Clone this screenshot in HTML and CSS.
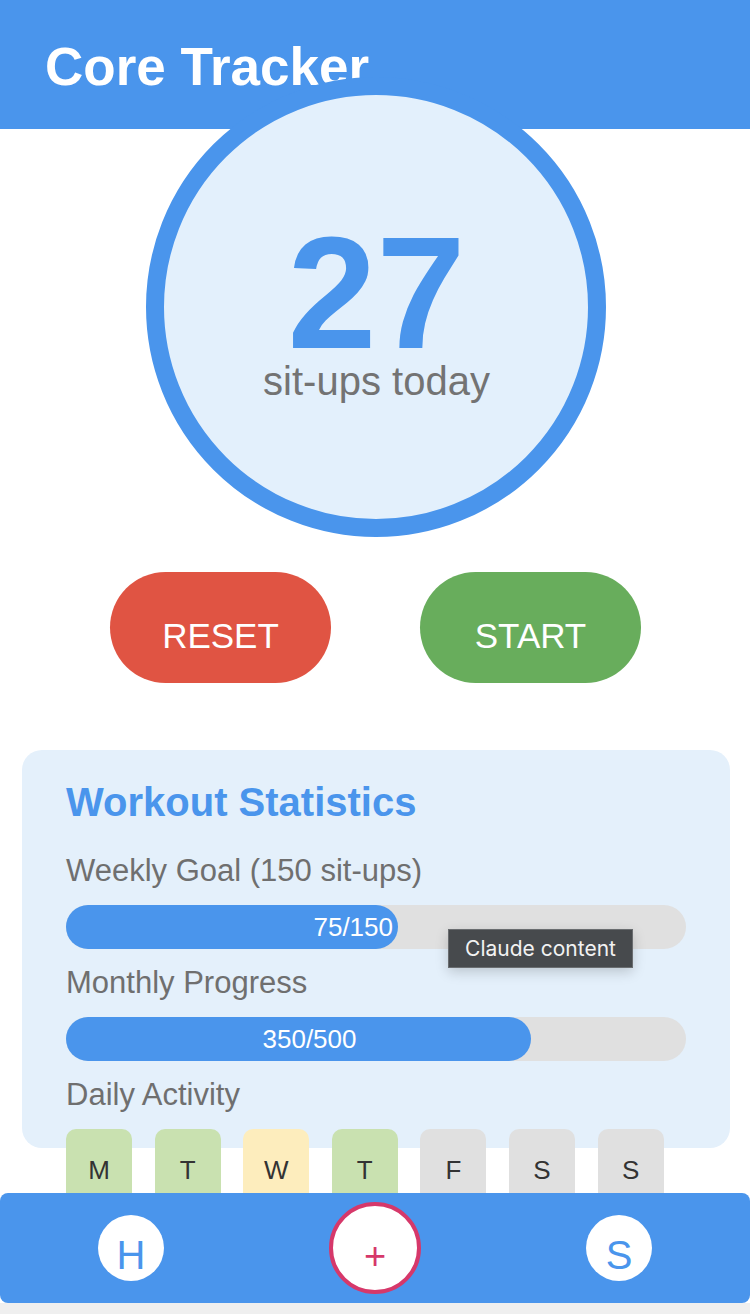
FILE: index.html
```html
<!DOCTYPE html>
<html lang="en">
<head>
<meta charset="utf-8">
<title>Core Tracker</title>
<link rel="stylesheet" href="styles.css">
</head>
<body>
<div class="app">
  <header class="top-bar">
    <h1 class="title">Core Tracker</h1>
  </header>

  <section class="counter-wrap">
    <div class="counter">
      <div class="count">27</div>
      <div class="count-label">sit-ups today</div>
    </div>
  </section>

  <section class="actions">
    <button class="btn btn-reset">RESET</button>
    <button class="btn btn-start">START</button>
  </section>

  <section class="stats">
    <h2 class="stats-title">Workout Statistics</h2>
    <div class="stat-label">Weekly Goal (150 sit-ups)</div>
    <div class="bar">
      <div class="fill fill-weekly" style="width: 332px;">75/150</div>
    </div>
    <div class="stat-label">Monthly Progress</div>
    <div class="bar">
      <div class="fill fill-monthly" style="width: 465px;">350/500</div>
    </div>
    <div class="stat-label">Daily Activity</div>
    <div class="days">
      <div class="day day-done">M</div>
      <div class="day day-done">T</div>
      <div class="day day-partial">W</div>
      <div class="day day-done">T</div>
      <div class="day day-none">F</div>
      <div class="day day-none">S</div>
      <div class="day day-none">S</div>
    </div>
  </section>

  <div class="tooltip">Claude content</div>

  <nav class="bottom-nav">
    <div class="nav-item"><span class="nav-icon">H</span></div>
    <div class="nav-item"><span class="nav-add">+</span></div>
    <div class="nav-item"><span class="nav-icon">S</span></div>
  </nav>
</div>
</body>
</html>
```

FILE: styles.css
```css
html {
  background: #efefef;
}

body {
  margin: 0;
  font-family: "Liberation Sans", Arial, sans-serif;
}

.app {
  background: #ffffff;
  min-height: 1303px;
  position: relative;
}

.top-bar {
  box-sizing: border-box;
  height: 129px;
  background: #4a95ec;
  padding: 37px 0 0 45px;
}

.title {
  margin: 0;
  color: #ffffff;
  font-size: 53px;
  line-height: 60px;
  font-weight: bold;
}

.counter-wrap {
  display: flex;
  justify-content: center;
  margin-top: -52px;
  padding-left: 1px;
  position: relative;
  z-index: 1;
}

.counter {
  box-sizing: border-box;
  width: 460px;
  height: 460px;
  border-radius: 50%;
  border: 18px solid #4a95ec;
  background: #e3f0fc;
  display: flex;
  flex-direction: column;
  align-items: center;
  justify-content: center;
  padding-top: 18px;
}

.count {
  color: #4a95ec;
  font-size: 160px;
  font-weight: bold;
  line-height: 130px;
  padding-left: 2px;
}

.count-label {
  color: #737373;
  font-size: 40px;
  line-height: 46px;
  padding-left: 2px;
}

.actions {
  display: flex;
  justify-content: center;
  gap: 89px;
  margin-top: 35px;
  padding-left: 1px;
}

.btn {
  box-sizing: border-box;
  width: 221px;
  height: 111px;
  border: none;
  border-radius: 56px;
  color: #ffffff;
  font-family: "Liberation Sans", Arial, sans-serif;
  font-size: 35px;
  padding: 16px 0 0;
  display: flex;
  align-items: center;
  justify-content: center;
}

.btn-reset {
  background: #e05443;
}

.btn-start {
  background: #68ad5c;
}

.stats {
  box-sizing: border-box;
  height: 398px;
  margin: 67px 20px 0 22px;
  padding: 30px 44px 0;
  background: #e4f0fb;
  border-radius: 20px;
}

.stats-title {
  margin: 0 0 28px;
  color: #4a95ec;
  font-size: 40px;
  line-height: 45px;
  font-weight: bold;
}

.stat-label {
  color: #6f6f6f;
  font-size: 31px;
  line-height: 36px;
  margin-bottom: 16px;
}

.bar {
  height: 44px;
  background: #e0e0e0;
  border-radius: 22px;
  margin-bottom: 16px;
  display: flex;
}

.fill {
  box-sizing: border-box;
  height: 44px;
  background: #4a95ec;
  border-radius: 22px;
  color: #ffffff;
  font-size: 26px;
  display: flex;
  align-items: center;
}

.fill-weekly {
  justify-content: flex-end;
  padding-right: 5px;
}

.fill-monthly {
  justify-content: center;
  padding-left: 22px;
}

.days {
  display: flex;
  gap: 22.6px;
}

.day {
  box-sizing: border-box;
  width: 66px;
  height: 82px;
  border-radius: 10px;
  color: #333333;
  font-size: 26px;
  display: flex;
  align-items: center;
  justify-content: center;
}

.day-done {
  background: #c9e1b0;
}

.day-partial {
  background: #fdedbd;
}

.day-none {
  background: #e0e0e0;
}

.tooltip {
  position: absolute;
  left: 448px;
  top: 929px;
  box-sizing: border-box;
  width: 185px;
  height: 39px;
  background: #474a4d;
  border: 1px solid #6a6d70;
  color: #f2f2f2;
  font-family: Inter, "Liberation Sans", sans-serif;
  font-size: 21px;
  display: flex;
  align-items: center;
  justify-content: center;
  box-shadow: 0 4px 12px rgba(0, 0, 0, 0.18);
  z-index: 5;
}

.bottom-nav {
  position: fixed;
  left: 0;
  right: 0;
  bottom: 11px;
  height: 110px;
  background: #4a95ec;
  border-radius: 8px;
  display: grid;
  grid-template-columns: repeat(3, 1fr);
  padding: 0 9px;
  z-index: 3;
}

.nav-item {
  display: flex;
  align-items: center;
  justify-content: center;
}

.nav-icon {
  box-sizing: border-box;
  width: 66px;
  height: 66px;
  border-radius: 50%;
  background: #ffffff;
  color: #4a95ec;
  font-size: 40px;
  padding-top: 14px;
  display: flex;
  align-items: center;
  justify-content: center;
}

.nav-add {
  box-sizing: border-box;
  width: 92px;
  height: 92px;
  border-radius: 50%;
  background: #ffffff;
  border: 4px solid #d6386a;
  color: #d6386a;
  font-size: 38px;
  padding-top: 16px;
  display: flex;
  align-items: center;
  justify-content: center;
}
```
